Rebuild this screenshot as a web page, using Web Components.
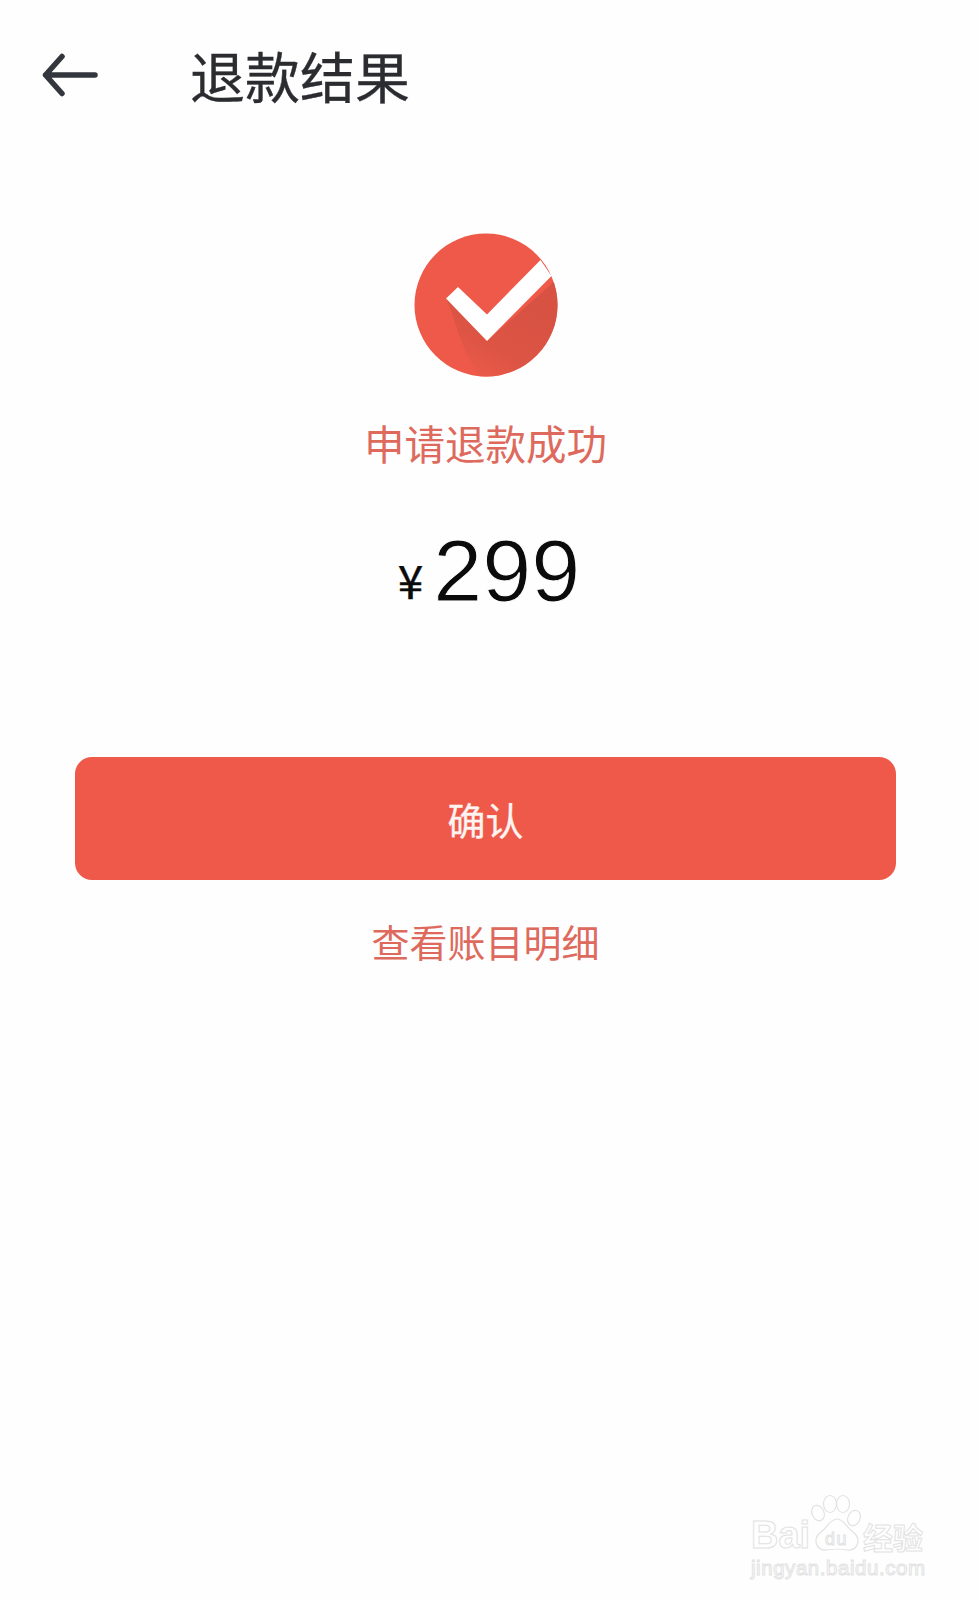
<!DOCTYPE html>
<html lang="zh-CN">
<head>
<meta charset="utf-8">
<title>退款结果</title>
<style>
html,body{margin:0;padding:0;background:#fefefe}
body{font-family:"Noto Sans CJK SC","Liberation Sans",sans-serif}
</style>
</head>
<body>
<refund-page>
  <app-bar title="退款结果"></app-bar>
  <result-mark></result-mark>
  <result-status>申请退款成功</result-status>
  <refund-amount value="299"></refund-amount>
  <primary-button>确认</primary-button>
  <text-link>查看账目明细</text-link>
  <baidu-mark></baidu-mark>
</refund-page>
<script>
function def(name, html, setup){
  customElements.define(name, class extends HTMLElement{
    connectedCallback(){
      if(this.shadowRoot) return;
      const r=this.attachShadow({mode:'open'});
      r.innerHTML=html;
      if(setup) setup.call(this,r);
    }
  });
}
def('refund-page',`<style>
:host{display:flex;flex-direction:column;position:relative;width:978px;height:1600px;overflow:hidden;background:#fefefe}
</style><slot></slot>`);
def('app-bar',`<style>
:host{display:flex;align-items:center;height:152px;padding-left:42px;box-sizing:border-box;flex:none}
svg{width:58px;height:46px;flex:none;display:block}
h1{margin:0 0 3px 90px;font:400 55px/1 "Noto Sans CJK SC",sans-serif;color:#2b2c30;-webkit-text-stroke:.3px #2b2c30}
</style>
<svg viewBox="0 0 58 46" aria-hidden="true"><path d="M20 3.500 3.500 22 20 40.500M3.500 22H53" fill="none" stroke="#33363d" stroke-width="5.500" stroke-linecap="round" stroke-linejoin="round"/></svg>
<h1></h1>`,function(r){r.querySelector('h1').textContent=this.getAttribute('title')});
def('result-mark',`<style>
:host{display:flex;justify-content:center;flex:none;margin-top:81px;padding-right:7px}
svg{width:144px;height:144px;display:block;overflow:visible}
</style>
<svg viewBox="0 0 144 144" aria-hidden="true">
<defs>
<clipPath id="c"><circle cx="72" cy="72" r="71.500"/></clipPath>
<linearGradient id="s" gradientUnits="userSpaceOnUse" x1="105" y1="70" x2="62" y2="140">
<stop offset="0" stop-color="#d85243"/><stop offset=".6" stop-color="#dc5444"/><stop offset="1" stop-color="#ea5948"/>
</linearGradient>
</defs>
<circle cx="72" cy="72" r="71.500" fill="#ee5949"/>
<path clip-path="url(#c)" d="M32 65C42 88 46 112 60 134L70 150H150V40L73 108Z" fill="url(#s)"/>
<path d="M32 65.500 44 54 73 81.500 126.500 27 137.500 43 73 108Z" fill="#fff"/>
</svg>`);
def('result-status',`<style>
:host{display:block;flex:none;margin-top:37px;padding-right:7px;text-align:center;font:400 40.500px/58px "Noto Sans CJK SC",sans-serif;color:#dd6a5c}
</style><slot></slot>`);
def('refund-amount',`<style>
:host{display:flex;justify-content:center;align-items:baseline;flex:none;margin-top:51px;color:#0b0b0c;height:96px;line-height:96px}
.y{font:400 46px/96px "Noto Sans CJK SC",sans-serif;margin-right:10px;transform:translateY(-2px);-webkit-text-stroke:.4px #0b0b0c}
.v{font:400 88px/96px "Liberation Sans",sans-serif;-webkit-text-stroke:1px #fefefe}
</style><span class="y">¥</span><span class="v"></span>`,function(r){r.querySelector('.v').textContent=this.getAttribute('value')});
def('primary-button',`<style>
:host{display:flex;align-items:center;justify-content:center;flex:none;box-sizing:border-box;width:821px;height:123px;margin:138px 0 0 75px;border-radius:17px;background:#ee5949;color:#fdf3f1;font:400 38px/1 "Noto Sans CJK SC",sans-serif;-webkit-text-stroke:.3px #fdf3f1}
</style><slot></slot>`);
def('text-link',`<style>
:host{display:block;flex:none;margin-top:33px;padding-right:7px;text-align:center;font:400 38px/56px "Noto Sans CJK SC",sans-serif;color:#dd6a5c}
</style><slot></slot>`);
def('baidu-mark',`<style>
:host{position:absolute;left:748px;top:1494px;width:190px;height:92px;display:block}
.t{position:absolute;white-space:nowrap;color:#fefefe;-webkit-text-stroke:1px #e2e2e2}
.bai{left:3px;top:18px;font:700 38px/46px "Liberation Sans",sans-serif}
.du{left:77px;top:32px;font:400 18px/26px "Liberation Sans",sans-serif;letter-spacing:1.500px}
.jw{left:115px;top:24px;font:700 30px/36px "Noto Sans CJK SC",sans-serif}
.url{left:3px;top:62px;font:400 20.500px/24px "Liberation Sans",sans-serif;letter-spacing:.55px}
svg{position:absolute;left:58px;top:0;width:62px;height:62px;overflow:visible}
</style>
<svg viewBox="0 0 62 62" aria-hidden="true" fill="none" stroke="#e2e2e2" stroke-width="1.200">
<ellipse cx="12" cy="19" rx="6" ry="8" transform="rotate(-25 12 19)"/>
<ellipse cx="24" cy="10" rx="6.500" ry="8.500"/>
<ellipse cx="37" cy="10" rx="6.500" ry="8.500"/>
<ellipse cx="48" cy="24" rx="6" ry="8" transform="rotate(25 48 24)"/>
<path d="M31 25C38 25 40 33 47 38 56 45 52 57 41 56 36 55 26 55 21 56 10 57 6 45 15 38 22 33 24 25 31 25Z"/>
</svg>
<span class="t bai">Bai</span><span class="t du">du</span><span class="t jw">经验</span><span class="t url">jingyan.baidu.com</span>`);
</script>
</body>
</html>
